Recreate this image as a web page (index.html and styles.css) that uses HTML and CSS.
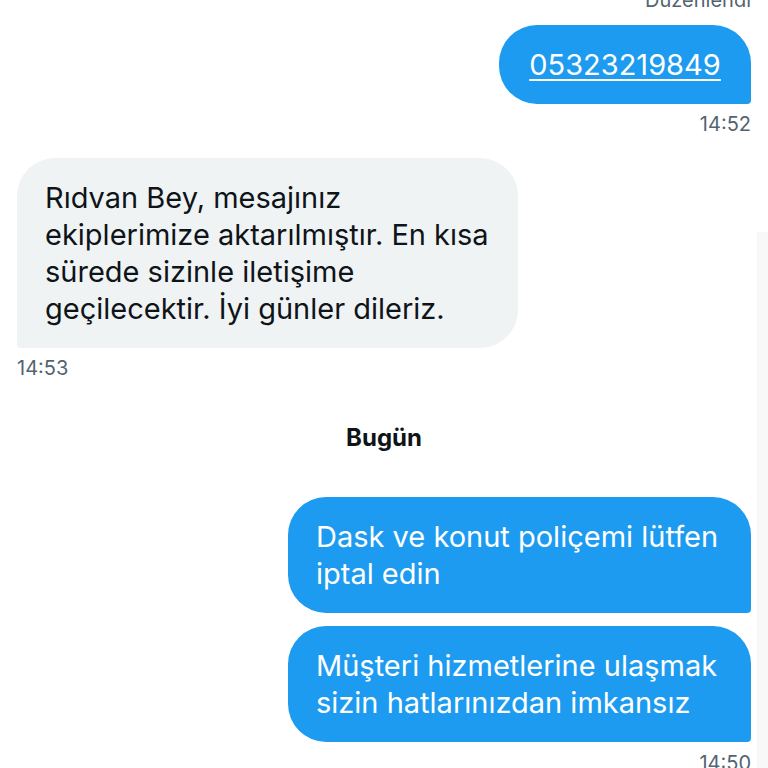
FILE: index.html
```html
<!DOCTYPE html>
<html lang="tr">
<head>
<meta charset="utf-8">
<link rel="stylesheet" href="styles.css">
</head>
<body>
<div class="scroll-rail"></div>
<main class="thread">
  <div class="edited">Düzenlendi</div>

  <div class="msg sent">
    <div class="bubble bubble-sent bubble-link"><a href="#">05323219849</a></div>
    <div class="time">14:52</div>
  </div>

  <div class="msg received">
    <div class="bubble bubble-received">Rıdvan Bey, mesajınız ekiplerimize aktarılmıştır. En kısa sürede sizinle iletişime geçilecektir. İyi günler dileriz.</div>
    <div class="time">14:53</div>
  </div>

  <div class="day">Bugün</div>

  <div class="msg sent group">
    <div class="bubble bubble-sent wide">Dask ve konut poliçemi lütfen iptal edin</div>
    <div class="bubble bubble-sent wide">Müşteri hizmetlerine ulaşmak sizin hatlarınızdan imkansız</div>
    <div class="time">14:50</div>
  </div>
</main>
</body>
</html>
```

FILE: styles.css
```css
html, body {
  margin: 0;
  padding: 0;
  background: #ffffff;
  height: 768px;
  overflow: hidden;
}

body {
  font-family: Inter, "Noto Sans", sans-serif;
  color: #0f1419;
  position: relative;
}

.scroll-rail {
  position: absolute;
  right: 0;
  top: 232px;
  bottom: 0;
  width: 11px;
  background: #f8f8f8;
}

.thread {
  display: flex;
  flex-direction: column;
  padding: 0 17px 0 17px;
  margin-top: -12px;
  position: relative;
}

.edited {
  align-self: flex-end;
  font-size: 20px;
  line-height: 24px;
  color: #536471;
}

.msg {
  display: flex;
  flex-direction: column;
}

.msg.sent {
  align-items: flex-end;
  margin-top: 13px;
}

.msg.received {
  align-items: flex-start;
  margin-top: 22px;
}

.bubble {
  font-size: 29px;
  line-height: 37px;
  padding: 21px 28px;
  border-radius: 38px;
  box-sizing: border-box;
}

.bubble-sent {
  background: #1d9bf0;
  color: #ffffff;
  border-bottom-right-radius: 4px;
}

.bubble-received {
  background: #eff3f4;
  color: #0f1419;
  border-bottom-left-radius: 4px;
  width: 501px;
}

.bubble-link {
  width: 252px;
  text-align: center;
  padding-left: 0;
  padding-right: 0;
}

.bubble-link a {
  color: #ffffff;
  text-decoration: underline;
  text-decoration-thickness: 2px;
  text-underline-offset: 4px;
}

.wide {
  width: 463px;
}

.group {
  gap: 13px;
  margin-top: 0;
}

.group .time {
  margin-top: -4px;
}

.time {
  font-size: 20px;
  line-height: 24px;
  color: #536471;
  margin-top: 8px;
}

.day {
  align-self: center;
  font-size: 24px;
  font-weight: 700;
  line-height: 28px;
  margin: 44px 0 32px;
}
```
